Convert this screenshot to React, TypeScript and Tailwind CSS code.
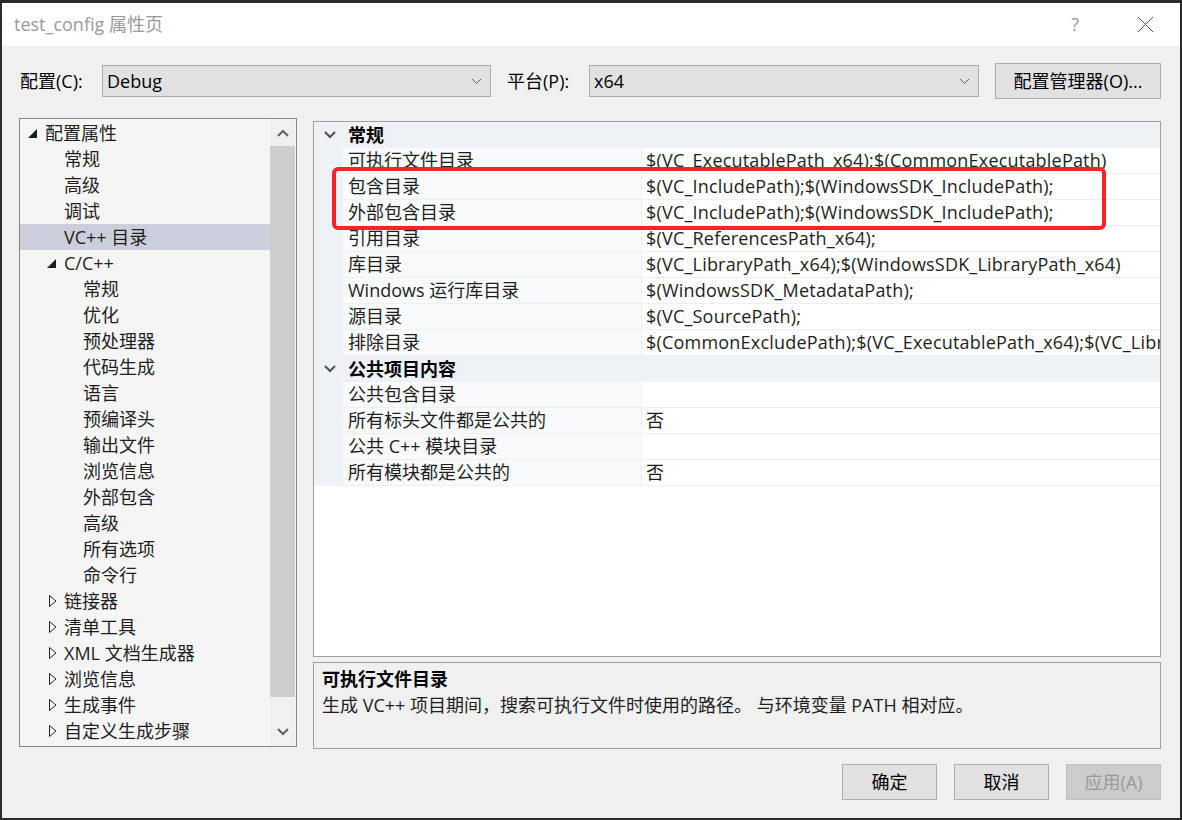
import React from "react";

const FONT = {
  fontFamily: '"Open Sans", "Noto Sans CJK SC", sans-serif',
};

type TreeItem = {
  label: string;
  level: 0 | 1 | 2;
  icon?: "open" | "closed";
  selected?: boolean;
};

const treeItems: TreeItem[] = [
  { label: "配置属性", level: 0, icon: "open" },
  { label: "常规", level: 1 },
  { label: "高级", level: 1 },
  { label: "调试", level: 1 },
  { label: "VC++ 目录", level: 1, selected: true },
  { label: "C/C++", level: 1, icon: "open" },
  { label: "常规", level: 2 },
  { label: "优化", level: 2 },
  { label: "预处理器", level: 2 },
  { label: "代码生成", level: 2 },
  { label: "语言", level: 2 },
  { label: "预编译头", level: 2 },
  { label: "输出文件", level: 2 },
  { label: "浏览信息", level: 2 },
  { label: "外部包含", level: 2 },
  { label: "高级", level: 2 },
  { label: "所有选项", level: 2 },
  { label: "命令行", level: 2 },
  { label: "链接器", level: 1, icon: "closed" },
  { label: "清单工具", level: 1, icon: "closed" },
  { label: "XML 文档生成器", level: 1, icon: "closed" },
  { label: "浏览信息", level: 1, icon: "closed" },
  { label: "生成事件", level: 1, icon: "closed" },
  { label: "自定义生成步骤", level: 1, icon: "closed" },
];

type GridRow =
  | { kind: "cat"; label: string }
  | { kind: "prop"; name: string; value: string };

const gridRows: GridRow[] = [
  { kind: "cat", label: "常规" },
  { kind: "prop", name: "可执行文件目录", value: "$(VC_ExecutablePath_x64);$(CommonExecutablePath)" },
  { kind: "prop", name: "包含目录", value: "$(VC_IncludePath);$(WindowsSDK_IncludePath);" },
  { kind: "prop", name: "外部包含目录", value: "$(VC_IncludePath);$(WindowsSDK_IncludePath);" },
  { kind: "prop", name: "引用目录", value: "$(VC_ReferencesPath_x64);" },
  { kind: "prop", name: "库目录", value: "$(VC_LibraryPath_x64);$(WindowsSDK_LibraryPath_x64)" },
  { kind: "prop", name: "Windows 运行库目录", value: "$(WindowsSDK_MetadataPath);" },
  { kind: "prop", name: "源目录", value: "$(VC_SourcePath);" },
  { kind: "prop", name: "排除目录", value: "$(CommonExcludePath);$(VC_ExecutablePath_x64);$(VC_LibraryPath_x64)" },
  { kind: "cat", label: "公共项目内容" },
  { kind: "prop", name: "公共包含目录", value: "" },
  { kind: "prop", name: "所有标头文件都是公共的", value: "否" },
  { kind: "prop", name: "公共 C++ 模块目录", value: "" },
  { kind: "prop", name: "所有模块都是公共的", value: "否" },
];

const SmallChevron = () => (
  <svg width="11" height="7" viewBox="0 0 11 7">
    <path d="M1 1 L5.5 5.5 L10 1" fill="none" stroke="#606060" strokeWidth="1" />
  </svg>
);

const Dropdown = ({ value, width }: { value: string; width: string }) => (
  <div
    className={`${width} shrink-0 h-[32px] flex items-center justify-between bg-[#e1e1e1] border border-[#adadad] pl-[4px] pr-[8px]`}
  >
    <span className="text-[18px] text-black">{value}</span>
    <SmallChevron />
  </div>
);

const TreeIcon = ({ icon }: { icon?: "open" | "closed" }) => {
  if (icon === "open")
    return (
      <svg width="9" height="9" viewBox="0 0 9 9">
        <polygon points="9,0 9,9 0,9" fill="#1e1e1e" />
      </svg>
    );
  return (
    <svg width="8" height="12" viewBox="0 0 8 12">
      <polygon points="0.5,0.5 7,6 0.5,11.5" fill="#fff" stroke="#1e1e1e" strokeWidth="1" />
    </svg>
  );
};

const Tree = () => (
  <div className="w-[278px] shrink-0 h-[629px] mt-[-3px] border border-[#828790] bg-[#f5f5f5] flex">
    <div className="flex-1 min-w-0 pt-[1px] overflow-hidden">
      {treeItems.map((it, i) => {
        let pad = "pl-[44px]";
        if (it.level === 2) pad = "pl-[63px]";
        if (it.icon === "open") pad = it.level === 0 ? "pl-[8px]" : "pl-[27px]";
        if (it.icon === "closed") pad = "pl-[29px]";
        return (
          <div
            key={i}
            className={`h-[26px] flex items-center text-[18px] text-[#1e1e1e] ${pad} ${
              it.selected ? "bg-[#cccedb]" : ""
            }`}
          >
            {it.icon && (
              <div
                className={`${
                  it.icon === "open" ? "w-[17px] pt-[1px]" : "w-[15px]"
                } shrink-0 flex items-center`}
              >
                <TreeIcon icon={it.icon} />
              </div>
            )}
            <span className="whitespace-nowrap">{it.label}</span>
          </div>
        );
      })}
    </div>
    {/* scrollbar */}
    <div className="w-[25px] shrink-0 flex flex-col bg-[#f0f0f0] mr-[1px]">
      <div className="h-[27px] flex items-center justify-center">
        <svg width="12" height="8" viewBox="0 0 12 8">
          <path d="M1 7 L6 2 L11 7" fill="none" stroke="#606060" strokeWidth="2" />
        </svg>
      </div>
      <div className="h-[551px] bg-[#cdcdcd]" />
      <div className="flex-1 flex items-end justify-center pb-[10px]">
        <svg width="12" height="8" viewBox="0 0 12 8">
          <path d="M1 1 L6 6 L11 1" fill="none" stroke="#606060" strokeWidth="2" />
        </svg>
      </div>
    </div>
  </div>
);

const CatChevron = () => (
  <svg width="12" height="8" viewBox="0 0 12 8">
    <path d="M1 1 L6 6 L11 1" fill="none" stroke="#505050" strokeWidth="2" />
  </svg>
);

const PropertyGrid = () => (
  <div className="relative h-[536px] border border-[#a0a0a0] bg-white overflow-hidden">
    {gridRows.map((r, i) =>
      r.kind === "cat" ? (
        <div key={i} className="h-[26px] flex items-center bg-[#eef1f6]">
          <div className="w-[29px] shrink-0 flex items-center justify-center pl-[2px]">
            <CatChevron />
          </div>
          <span className="pl-[5px] text-[18px] font-bold text-black">{r.label}</span>
        </div>
      ) : (
        <div key={i} className="h-[26px] flex">
          <div className="w-[29px] shrink-0 bg-[#eef1f6]" />
          <div className="w-[298px] shrink-0 flex items-center pl-[5px] bg-[#f9fafc] border-b border-[#eceff4] text-[18px] text-[#1e1e1e] whitespace-nowrap">
            {r.name}
          </div>
          <div className="flex-1 min-w-0 flex items-center pl-[4px] bg-white border-l border-b border-[#eceff4] text-[18px] tracking-[0.2px] text-[#1e1e1e] whitespace-nowrap overflow-hidden">
            {r.value}
          </div>
        </div>
      )
    )}
    {/* red annotation box */}
    <div className="absolute left-[18px] top-[45px] w-[774px] h-[63px] border-[4px] border-[#fa2323] rounded-[6px]" />
  </div>
);

const Button = ({ label, disabled }: { label: string; disabled?: boolean }) => (
  <div
    className={`w-[95px] h-[36px] flex items-center justify-center text-[18px] border ${
      disabled
        ? "bg-[#cccccc] border-[#bfbfbf] text-[#9a9a9a]"
        : "bg-[#e1e1e1] border-[#adadad] text-black"
    }`}
  >
    {label}
  </div>
);

export default function App() {
  return (
    <div style={FONT} className="w-[1182px] h-[820px] bg-[#2b2b2b] pt-[3px] pl-[2px] pr-[2px] pb-[2px]">
      <div className="w-full h-full flex flex-col bg-[#f0f0f0]">
        {/* title bar */}
        <div className="h-[43px] bg-white flex items-center justify-between pl-[12px] pr-[26px]">
          <span className="text-[18px] text-[#9a9a9a]">test_config 属性页</span>
          <div className="flex items-center gap-[58px]">
            <span className="text-[18px] text-[#9a9a9a]">?</span>
            <svg width="17" height="17" viewBox="0 0 17 17">
              <path d="M1 1 L16 16 M16 1 L1 16" stroke="#555" strokeWidth="1" />
            </svg>
          </div>
        </div>

        {/* config row */}
        <div className="mt-[17px] h-[36px] flex items-center pl-[17px] pr-[19px]">
          <span className="w-[83px] shrink-0 pl-[1px] text-[18px] text-black">配置(C):</span>
          <Dropdown value="Debug" width="w-[389px]" />
          <span className="w-[98px] shrink-0 pl-[16px] text-[18px] text-black">平台(P):</span>
          <Dropdown value="x64" width="w-[390px]" />
          <div className="ml-[16px] w-[166px] shrink-0 h-[36px] flex items-center justify-center bg-[#e1e1e1] border border-[#adadad] text-[18px] text-black">
            配置管理器(O)...
          </div>
        </div>

        {/* main */}
        <div className="mt-[22px] flex pl-[17px] pr-[19px] gap-[16px]">
          <Tree />
          <div className="flex-1 min-w-0 flex flex-col gap-[5px]">
            <PropertyGrid />
            <div className="h-[87px] border border-[#a0a0a0] bg-[#f0f0f0] pl-[8px] pt-[3px]">
              <div className="h-[26px] flex items-center text-[18px] font-bold text-black">
                可执行文件目录
              </div>
              <div className="h-[26px] flex items-center text-[18px] text-[#1e1e1e] whitespace-nowrap">
                生成 VC++ 项目期间，搜索可执行文件时使用的路径。 与环境变量 PATH 相对应。
              </div>
            </div>
          </div>
        </div>

        {/* buttons */}
        <div className="mt-[15px] flex justify-end gap-[17px] pr-[19px]">
          <Button label="确定" />
          <Button label="取消" />
          <Button label="应用(A)" disabled />
        </div>
      </div>
    </div>
  );
}
